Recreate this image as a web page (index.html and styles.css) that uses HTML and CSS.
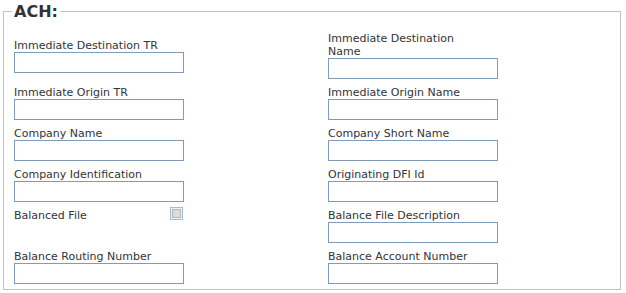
FILE: index.html
```html
<!DOCTYPE html>
<html>
  <head>
    <meta charset="UTF-8" />
    <link rel="stylesheet" href="styles.css">
  </head>

  <body>
    <fieldset class="group">
      <legend>ACH:</legend>

      <div class="fields">
        <div class="field">
          <label for="destTr">Immediate Destination TR</label>
          <input type="text" id="destTr" />
        </div>
        <div class="field">
          <label for="destName">Immediate Destination Name</label>
          <input type="text" id="destName" />
        </div>

        <div class="field">
          <label for="originTr">Immediate Origin TR</label>
          <input type="text" id="originTr" />
        </div>
        <div class="field">
          <label for="originName">Immediate Origin Name</label>
          <input type="text" id="originName" />
        </div>

        <div class="field">
          <label for="companyName">Company Name</label>
          <input type="text" id="companyName" />
        </div>
        <div class="field">
          <label for="companyShort">Company Short Name</label>
          <input type="text" id="companyShort" />
        </div>

        <div class="field">
          <label for="companyId">Company Identification</label>
          <input type="text" id="companyId" />
        </div>
        <div class="field">
          <label for="dfiId">Originating DFI Id</label>
          <input type="text" id="dfiId" />
        </div>

        <div class="field top">
          <div class="check-line">
            <label for="balanced">Balanced File</label>
            <input type="checkbox" id="balanced" />
          </div>
        </div>
        <div class="field">
          <label for="balanceDesc">Balance File Description</label>
          <input type="text" id="balanceDesc" />
        </div>

        <div class="field">
          <label for="routing">Balance Routing Number</label>
          <input type="text" id="routing" />
        </div>
        <div class="field">
          <label for="account">Balance Account Number</label>
          <input type="text" id="account" />
        </div>
      </div>
    </fieldset>
  </body>
</html>
```

FILE: styles.css
```css
html {
  font-size: 11px;
}

body {
  margin: 0;
  padding-top: 2px;
  font-family: "DejaVu Sans", Verdana, sans-serif;
  color: #333;
  background: #fff;
}

.group {
  margin: 0 5px 0 3px;
  padding: 11px 8px 5px 8px;
  border: 1px solid #c3c3c3;
}

.group legend {
  font-size: 16px;
  font-weight: bold;
  padding: 0 2px;
  color: #333;
}

.fields {
  display: grid;
  grid-template-columns: 314px 1fr;
  row-gap: 7px;
  align-items: center;
  padding-left: 2px;
}

.field {
  width: 170px;
}

.field.top {
  align-self: start;
}

.field label {
  display: block;
  max-width: 155px;
  line-height: 13px;
}

.field input[type="text"] {
  display: block;
  box-sizing: border-box;
  width: 170px;
  height: 21px;
  margin: 0;
  border: 1px solid #7f9db9;
  padding: 2px 3px;
  font-family: inherit;
  font-size: 11px;
}

.check-line {
  display: flex;
  justify-content: space-between;
  align-items: flex-start;
}

.check-line input[type="checkbox"] {
  appearance: none;
  -webkit-appearance: none;
  width: 13px;
  height: 13px;
  margin: -2px 1px 0 0;
  border: 1px solid #a9bbd3;
  background: #dcdcdc;
  box-shadow: inset 0 0 0 1px #f4f4f4, inset 0 0 0 2px #b5b5b5;
  box-sizing: border-box;
}
```
